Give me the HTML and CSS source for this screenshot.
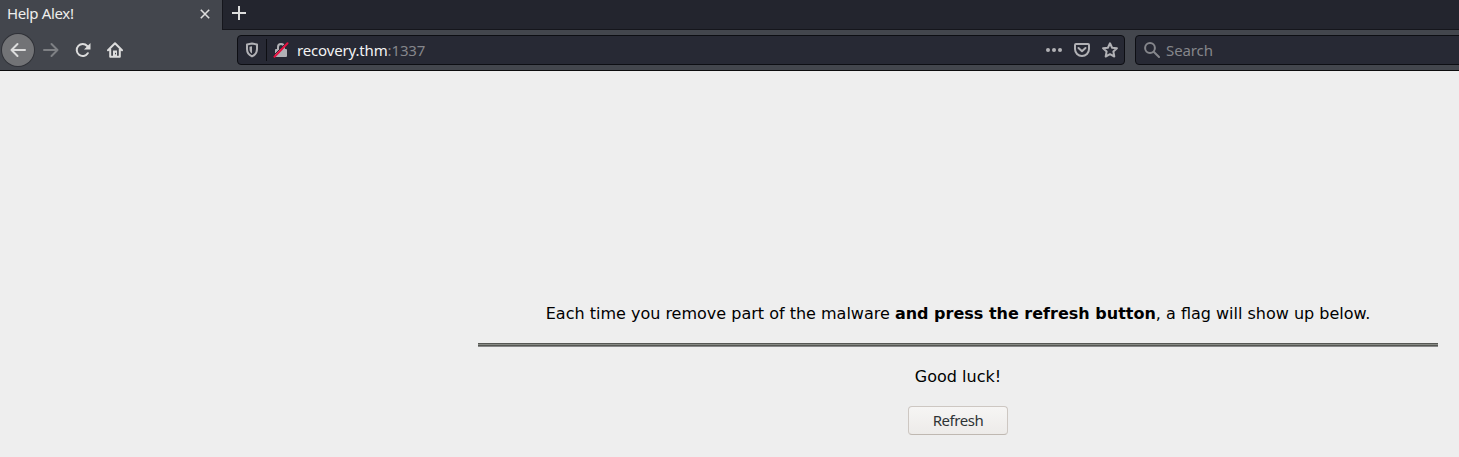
FILE: index.html
```
<!DOCTYPE html>
<html lang="en">
<head>
<meta charset="utf-8">
<title>Help Alex!</title>
<link rel="stylesheet" href="styles.css">
</head>
<body>
<header class="browser">
  <div class="tabs">
    <div class="tab"><span class="tab-title">Help Alex!</span>
      <svg class="tab-close" width="10" height="10" viewBox="0 0 10 10"><path d="M.8.8l8.4 8.4M9.2.8L.8 9.2"/></svg>
    </div>
    <svg class="new-tab" width="14" height="14" viewBox="0 0 14 14"><path d="M7 0v14M0 7h14"/></svg>
  </div>
  <div class="toolbar">
    <div class="nav">
      <span class="back"><svg class="icon" width="16" height="16" viewBox="0 0 16 16"><path d="M15 8H1.500M7.500 2L1.500 8l6 6"/></svg></span>
      <svg class="icon forward" width="16" height="16" viewBox="0 0 16 16"><path d="M1 8h13.500M8.500 2l6 6-6 6"/></svg>
      <svg class="icon reload" width="16" height="16" viewBox="0 0 16 16"><path d="M12.800 11.200A6 6 0 1 1 12.200 4"/><path class="solid" d="M15.500 1v6.500H9z"/></svg>
      <svg class="icon home" width="16" height="16" viewBox="0 0 16 16"><path d="M1 8.200L8 1.300l7 6.900M3.200 7v7.800h9.600V7"/><path class="solid" d="M6 15V8.500h4V15z"/><path class="knob" d="M8.500 10.800v1.500"/></svg>
    </div>
    <div class="field address">
      <svg class="icon shield" width="14" height="16" viewBox="0 0 14 16"><path d="M7 1.600L12 2.500V7c0 3.600-1.800 6-5 7.400C3.800 13 2 10.600 2 7V2.500z"/><path class="solid" d="M7 4.200v7.400C5.200 10.400 4.500 9 4.500 7V4.700z"/></svg>
      <span class="divider"></span>
      <svg class="icon lock" width="16" height="16" viewBox="0 0 16 16"><path d="M5 8V5a3 3 0 0 1 6 0v3"/><rect class="solid" x="2" y="7" width="12" height="8" rx="1"/><path class="gap" d="M1 13L13 1"/><path class="strike" d="M1.500 14.700L14.500 1.300"/></svg>
      <span class="url">recovery.thm<span class="port">:1337</span></span>
      <svg class="icon dots" width="18" height="6" viewBox="0 0 18 6"><circle class="solid" cx="3" cy="3" r="2"/><circle class="solid" cx="9" cy="3" r="2"/><circle class="solid" cx="15" cy="3" r="2"/></svg>
      <svg class="icon pocket" width="16" height="16" viewBox="0 0 16 16"><path d="M2 2h12q1 0 1 1v4a7 7 0 0 1-14 0V3q0-1 1-1z"/><path d="M4.500 6L8 9.300 11.500 6"/></svg>
      <svg class="icon star" width="16" height="16" viewBox="0 0 16 16"><path d="M8 1.300l2.100 4.400 4.800.6-3.500 3.300.9 4.900L8 12.200l-4.300 2.300.9-4.900L1.100 6.300l4.800-.6z"/></svg>
    </div>
    <div class="field search">
      <svg class="icon" width="16" height="16" viewBox="0 0 16 16"><circle cx="6" cy="6" r="4.900"/><path d="M9.700 9.700l5.300 5.300"/></svg>
      <span>Search</span>
    </div>
  </div>
</header>
<main class="page">
  <p class="message">Each time you remove part of the malware <b>and press the refresh button</b>, a flag will show up below.</p>
  <hr class="rule">
  <p class="luck">Good luck!</p>
  <button class="refresh">Refresh</button>
</main>
</body>
</html>
```
FILE: styles.css
```
* { box-sizing: border-box; }
body { margin: 0; height: 457px; overflow: hidden; background: #eee; font: 16px/19px "DejaVu Sans", sans-serif; color: #000; }
.browser { height: 71px; background: #43464d; border-bottom: 1px solid #0c0c0d; font: 15px/20px "Noto Sans", sans-serif; }
.tabs { height: 30px; display: flex; background: #23252e; border-bottom: 1px solid #15161c; }
.tab { width: 223px; height: 30px; display: flex; align-items: center; justify-content: space-between; padding: 0 12px 2px 7px; background: #43464d; border-right: 1px solid #15161c; color: #eeeeec; letter-spacing: -0.36px; }
.tab-title { padding-bottom: 2px; }
.tab-close { stroke: #ddd; stroke-width: 1.6; fill: none; }
.new-tab { margin: 6px 0 0 9px; stroke: #ddd; stroke-width: 2; }
.toolbar { height: 40px; display: flex; align-items: center; overflow: hidden; }
.nav { width: 237px; display: flex; align-items: center; flex: none; padding-left: 2px; color: #dcdcdc; }
.icon { flex: none; fill: none; stroke: currentColor; stroke-width: 2; stroke-linejoin: round; stroke-linecap: round; }
.solid { fill: currentColor; stroke: none; }
.back { width: 32px; height: 32px; display: grid; place-items: center; border-radius: 50%; background: #727376; box-shadow: 0 0 0 1px #303238; }
.forward { margin-left: 9px; color: #7e8084; }
.reload { margin-left: 16px; }
.home { margin-left: 16px; }
.knob { stroke: #43464d; stroke-width: 1; stroke-linecap: butt; }
.field { height: 30px; flex: none; display: flex; align-items: center; border: 1px solid #0d0e13; border-radius: 4px; background: #272934; color: #b1b1b5; }
.address { width: 888px; padding: 0 6px 0 7px; }
.divider { width: 1px; height: 22px; margin: 0 6px 0 7px; background: #0d0e13; }
.lock .gap { stroke: #272934; stroke-width: 1; }
.lock .strike { stroke: #e5103f; stroke-width: 2; }
.url { margin-left: 8px; color: #f3f3f3; flex: 1; letter-spacing: -0.15px; }
.port { color: #85868b; }
.pocket { margin-left: 11px; }
.star { margin-left: 12px; }
.search { width: 340px; margin-left: 10px; padding-left: 8px; color: #85868b; }
.search span { margin-left: 6px; letter-spacing: -0.1px; }
.page { width: 960px; margin-left: 478px; padding-top: 233px; display: flex; flex-direction: column; align-items: center; }
.message, .luck { margin: 0; white-space: nowrap; }
.rule { width: 960px; height: 4px; margin: 20px 0; border: 0; background: linear-gradient(#555753 1px, #888a85 1px 2px, #555753 2px 3px, #888 3px); }
.refresh { width: 100px; height: 29px; margin-top: 20px; padding: 0 0 2px; border: 1px solid #cdc7c2; border-bottom-color: #bfb8b1; border-radius: 4px; background: linear-gradient(#f6f5f4, #edebe9); color: #2e3436; font: 15px/20px "Noto Sans", sans-serif; letter-spacing: -0.45px; }
```
